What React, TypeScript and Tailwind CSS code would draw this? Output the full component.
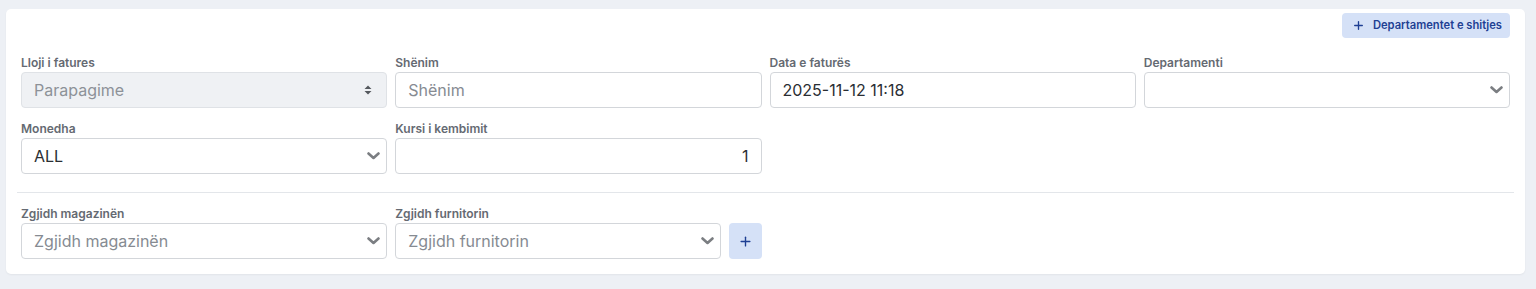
import { Plus } from "lucide-react";

function Label({ children }: { children: React.ReactNode }) {
  return (
    <label className="block text-[12px] leading-4 font-semibold text-[#656a72] mb-px">
      {children}
    </label>
  );
}

function Chevron() {
  return (
    <svg
      width="13"
      height="8"
      viewBox="0 0 13 8"
      className="absolute right-[6px] top-1/2 -translate-y-1/2 pointer-events-none"
    >
      <path d="M1.5 1.5 L6.5 6 L11.5 1.5" fill="none" stroke="#7b7e82" strokeWidth="2.6" strokeLinecap="round" strokeLinejoin="round" />
    </svg>
  );
}

function Select({ value, placeholder }: { value?: string; placeholder?: string }) {
  return (
    <div className="relative h-9 rounded-[4px] border border-[#d3d6da] bg-white flex items-center px-3 text-[16px]">
      {value ? (
        <span className="text-[#2a2e33]">{value}</span>
      ) : (
        <span className="text-[#868b92]">{placeholder}</span>
      )}
      <Chevron />
    </div>
  );
}

export default function App() {
  return (
    <div className="min-h-[289px] bg-[#edf0f5] pt-[9px] pl-[6px] pr-[11px] pb-[15px] font-['Inter',sans-serif]">
      <div className="bg-white rounded-[5px] shadow-[0_1px_2px_rgba(0,0,0,0.05)] pt-[4px] pb-[15px] pl-[15px] pr-[15px]">
        <div className="flex justify-end">
          <button className="h-[25px] pl-[10px] pr-[8px] rounded-[4px] bg-[#d5e1f7] text-[#1e3f93] text-[11.2px] font-semibold flex items-center gap-[8px]">
            <Plus size={13} strokeWidth={2.5} />
            Departamentet e shitjes
          </button>
        </div>

        <div className="grid grid-cols-4 gap-x-2 mt-[17px]">
          <div>
            <Label>Lloji i fatures</Label>
            <div className="relative h-9 rounded-[4px] border border-[#dfe2e6] bg-[#eff1f4] flex items-center px-3 text-[16px] text-[#8d9198]">
              Parapagime
              <svg width="8" height="10" viewBox="0 0 8 10" className="absolute right-[14px] top-1/2 -translate-y-1/2">
                <path d="M4 0.5 L7.5 4 H0.5 Z M4 9.5 L7.5 6 H0.5 Z" fill="#55595e" />
              </svg>
            </div>
          </div>
          <div>
            <Label>Shënim</Label>
            <div className="h-9 rounded-[4px] border border-[#d3d6da] bg-white flex items-center px-3 text-[16px] text-[#868b92]">
              Shënim
            </div>
          </div>
          <div>
            <Label>Data e faturës</Label>
            <div className="h-9 rounded-[4px] border border-[#d3d6da] bg-white flex items-center px-3 text-[16px] text-[#2a2e33]">
              2025-11-12 11:18
            </div>
          </div>
          <div>
            <Label>Departamenti</Label>
            <Select />
          </div>

          <div className="mt-[13px]">
            <Label>Monedha</Label>
            <Select value="ALL" />
          </div>
          <div className="mt-[13px]">
            <Label>Kursi i kembimit</Label>
            <div className="h-9 rounded-[4px] border border-[#d3d6da] bg-white flex items-center justify-end px-3 text-[16px] text-[#2a2e33]">
              1
            </div>
          </div>
        </div>

        <div className="mt-[18px] mx-[-4px] border-t border-[#e3e6ea]" />

        <div className="grid grid-cols-4 gap-x-2 mt-[13px]">
          <div>
            <Label>Zgjidh magazinën</Label>
            <Select placeholder="Zgjidh magazinën" />
          </div>
          <div>
            <Label>Zgjidh furnitorin</Label>
            <div className="flex gap-2">
              <div className="flex-1">
                <Select placeholder="Zgjidh furnitorin" />
              </div>
              <button className="h-9 w-[33px] rounded-[4px] bg-[#d5e1f7] text-[#1e3f93] flex items-center justify-center">
                <Plus size={15} strokeWidth={2.2} />
              </button>
            </div>
          </div>
        </div>
      </div>
    </div>
  );
}
